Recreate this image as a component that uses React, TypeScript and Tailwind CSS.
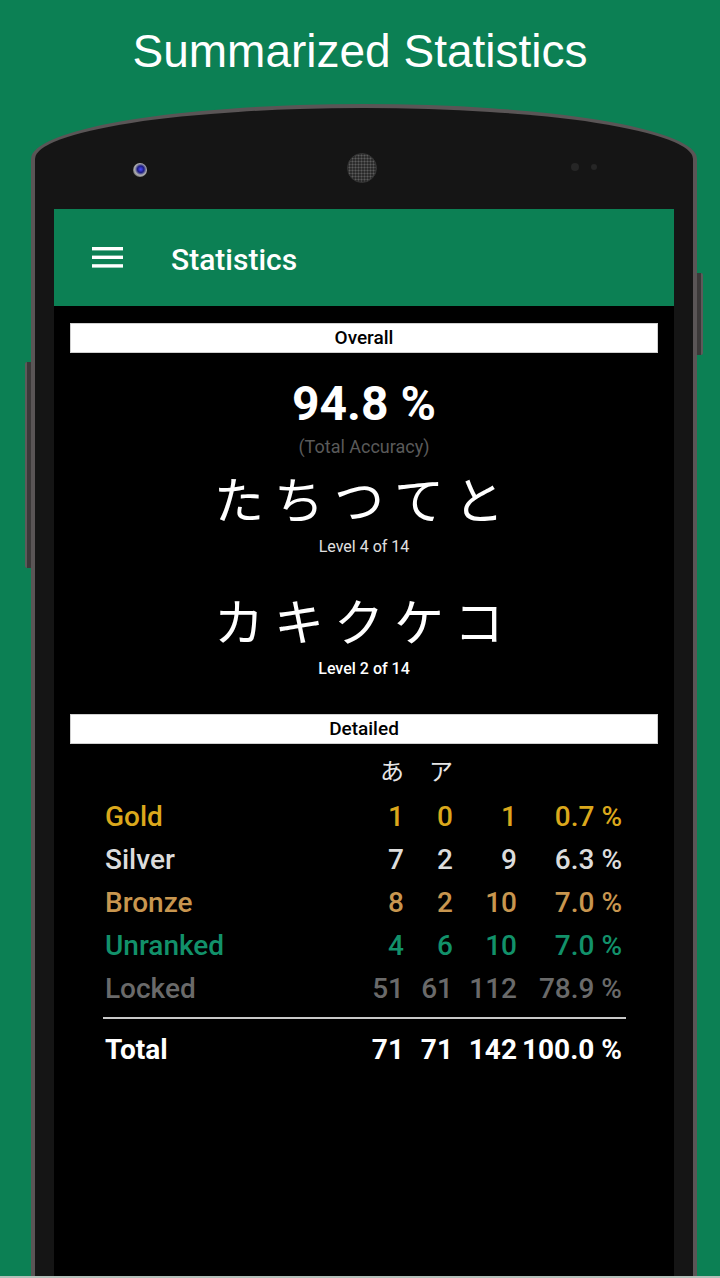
import React from "react";

type Row = { label: string; a: string; k: string; t: string; p: string; color: string; weight: string };

const rows: Row[] = [
  { label: "Gold", a: "1", k: "0", t: "1", p: "0.7 %", color: "text-[#dba81c]", weight: "font-medium" },
  { label: "Silver", a: "7", k: "2", t: "9", p: "6.3 %", color: "text-[#dcdcdc]", weight: "font-medium" },
  { label: "Bronze", a: "8", k: "2", t: "10", p: "7.0 %", color: "text-[#c8964f]", weight: "font-medium" },
  { label: "Unranked", a: "4", k: "6", t: "10", p: "7.0 %", color: "text-[#12916a]", weight: "font-medium" },
  { label: "Locked", a: "51", k: "61", t: "112", p: "78.9 %", color: "text-[#6a6a6a]", weight: "font-medium" },
];

function SectionBar({ children }: { children: React.ReactNode }) {
  return (
    <div className="h-[30px] bg-white border border-[#d0d0d0] flex items-center justify-center text-black text-[19px] leading-[30px] font-medium">
      {children}
    </div>
  );
}

function TableRow({ r }: { r: Row }) {
  return (
    <div className={`grid grid-cols-[1fr_50px_49px_64px_105px] h-[43px] leading-[43px] text-[28px] ${r.color} ${r.weight}`}>
      <div>{r.label}</div>
      <div className="text-right">{r.a}</div>
      <div className="text-right">{r.k}</div>
      <div className="text-right">{r.t}</div>
      <div className="text-right">{r.p}</div>
    </div>
  );
}

export default function App() {
  return (
    <div className="w-[720px] h-[1278px] bg-[#0c8054] overflow-hidden flex flex-col font-['Roboto','Noto_Sans_CJK_JP',sans-serif]">
      {/* Title */}
      <div className="h-[104px] shrink-0 flex justify-center pt-[28px]">
        <div className="font-['Liberation_Sans',Arial,sans-serif] text-white text-[46px] leading-[46px]">
          Summarized Statistics
        </div>
      </div>

      {/* Phone row */}
      <div className="flex-1 min-h-0 flex items-stretch">
        <div className="w-[25px] shrink-0" />
        <div className="w-[6px] h-[206px] mt-[258px] self-start shrink-0 bg-[#3b3838] border-l-2 border-[#5e5a5a] rounded-l-[2px]" />

        {/* Phone */}
        <div className="w-[666px] shrink-0 border-[4px] border-b-0 border-[#5a5556] rounded-t-[50%_55px] bg-[#151515] flex flex-col">
          {/* Top bezel */}
          <div className="h-[101px] shrink-0 px-[19px] flex items-start">
            <div className="ml-[79px] mt-[55px] w-[14px] h-[14px] rounded-full bg-[radial-gradient(circle_at_55%_45%,#4a4aff_0%,#1c1c80_30%,#b0b0b0_55%,#5a5a5a_78%,#222_100%)]" />
            <div className="ml-[200px] mt-[45px] w-[30px] h-[30px] rounded-full bg-[#2c2c2c] bg-[radial-gradient(circle,#5c5c5c_0.8px,transparent_1.2px)] bg-[length:3px_3px] border border-[#333]" />
            <div className="ml-[194px] mt-[55px] w-[8px] h-[8px] rounded-full bg-[#262626]" />
            <div className="ml-[12px] mt-[56px] w-[6px] h-[6px] rounded-full bg-[#262626]" />
          </div>

          {/* Screen */}
          <div className="flex-1 px-[19px] flex flex-col">
            <div className="flex-1 bg-black flex flex-col">
              {/* App bar */}
              <div className="h-[97px] shrink-0 bg-[#0c8054] flex items-center pl-[38px]">
                <svg width="31" height="21" viewBox="0 0 31 21" className="shrink-0">
                  <rect x="0" y="0" width="31" height="3.4" fill="#fff" />
                  <rect x="0" y="8.6" width="31" height="3.4" fill="#fff" />
                  <rect x="0" y="17.2" width="31" height="3.4" fill="#fff" />
                </svg>
                <div className="ml-[48px] mt-[4px] text-white text-[30px] font-medium leading-[36px]">Statistics</div>
              </div>

              {/* Overall */}
              <div className="px-[16px] pt-[17px]">
                <SectionBar>Overall</SectionBar>
              </div>
              <div className="flex flex-col items-center">
                <div className="mt-[23px] text-white text-[48px] leading-[56px] font-bold">94.8 %</div>
                <div className="mt-[4px] text-[#5a5a5a] text-[18px] leading-[22px]">(Total Accuracy)</div>
                <div className="mt-[9px] text-white text-[50px] leading-[60px] tracking-[10px] font-['Noto_Sans_CJK_JP',sans-serif]">
                  たちつてと
                </div>
                <div className="mt-[10px] text-[#e0e0e0] text-[16px] leading-[20px]">Level 4 of 14</div>
                <div className="mt-[32px] text-white text-[50px] leading-[60px] tracking-[10px] font-['Noto_Sans_CJK_JP',sans-serif]">
                  カキクケコ
                </div>
                <div className="mt-[10px] text-white text-[16px] leading-[20px] font-medium">Level 2 of 14</div>
              </div>

              {/* Detailed */}
              <div className="px-[16px] mt-[35px]">
                <SectionBar>Detailed</SectionBar>
              </div>
              <div className="ml-[51px] mr-[52px]">
                <div className="mt-[5px] grid grid-cols-[1fr_50px_49px_64px_105px] h-[46px] leading-[46px] text-[24px] text-[#e6e6e6]">
                  <div />
                  <div className="text-right">あ</div>
                  <div className="text-right">ア</div>
                  <div />
                  <div />
                </div>
                {rows.map((r) => (
                  <TableRow key={r.label} r={r} />
                ))}
              </div>
              <div className="ml-[49px] mr-[48px] mt-[7px] h-[2px] bg-[#c8c8c8]" />
              <div className="ml-[51px] mr-[52px] mt-[9px]">
                <TableRow r={{ label: "Total", a: "71", k: "71", t: "142", p: "100.0 %", color: "text-white", weight: "font-bold" }} />
              </div>
            </div>
          </div>
        </div>

        <div className="w-[6px] h-[82px] mt-[169px] self-start shrink-0 bg-[#3b3838] border-r-2 border-[#5e5a5a] rounded-r-[2px]" />
      </div>
      <div className="h-[2px] shrink-0 bg-[#b4c0ba]" />
    </div>
  );
}
